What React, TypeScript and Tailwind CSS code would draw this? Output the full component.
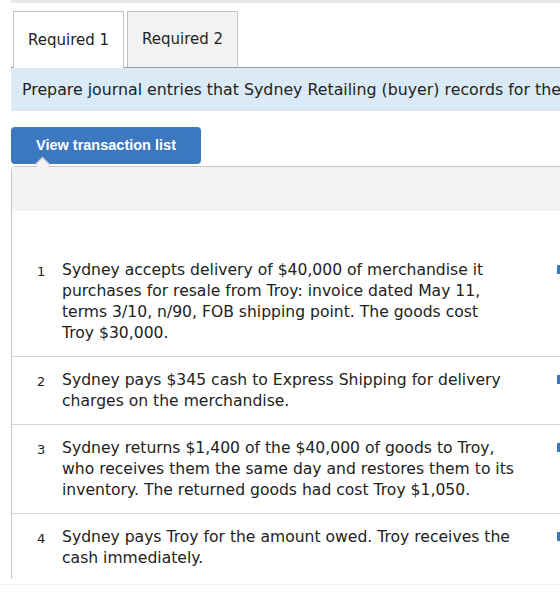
import React from "react";

const rows = [
  {
    n: "1",
    t: [
      "Sydney accepts delivery of $40,000 of merchandise it",
      "purchases for resale from Troy: invoice dated May 11,",
      "terms 3/10, n/90, FOB shipping point. The goods cost",
      "Troy $30,000.",
    ],
  },
  {
    n: "2",
    t: [
      "Sydney pays $345 cash to Express Shipping for delivery",
      "charges on the merchandise.",
    ],
  },
  {
    n: "3",
    t: [
      "Sydney returns $1,400 of the $40,000 of goods to Troy,",
      "who receives them the same day and restores them to its",
      "inventory. The returned goods had cost Troy $1,050.",
    ],
  },
  {
    n: "4",
    t: [
      "Sydney pays Troy for the amount owed. Troy receives the",
      "cash immediately.",
    ],
  },
];

export default function App() {
  return (
    <div className="w-[560px] h-[593px] bg-white overflow-hidden relative font-['DejaVu_Sans',Verdana,sans-serif] text-[#222]">
      <div className="ml-[11px] h-[3px] bg-[#e8e8e8]" />
      <div className="flex items-end mt-[8px] ml-[11px]">
        <div className="w-[2px] h-px bg-[#9a9a9a]" />
        <div className="w-[111px] h-[57px] border border-b-0 border-[#c4c4c4] bg-white flex items-center justify-center text-[15px]">
          Required 1
        </div>
        <div className="w-[3px] h-px bg-[#9a9a9a]" />
        <div className="w-[111px] h-[57px] border border-[#c4c4c4] border-b-[#9a9a9a] bg-[#f2f2f2] flex items-center justify-center text-[15px]">
          Required 2
        </div>
        <div className="flex-1 h-px bg-[#9a9a9a]" />
      </div>
      <div className="ml-[11px] h-[43px] bg-[#dbeaf7] flex items-center pl-[11px] whitespace-nowrap overflow-hidden text-[15.8px] text-[#222]">
        Prepare journal entries that Sydney Retailing (buyer) records for the
      </div>
      <div className="relative pt-[16px]">
        <div className="ml-[11px] w-[190px] h-[37px] rounded-[4px] bg-[#3b78bf] text-white font-['Liberation_Sans',Arial,sans-serif] font-bold text-[14.5px] flex items-center justify-center">
          View transaction list
        </div>
        <div className="ml-[11px] mt-[2px] w-[600px] border-l border-t border-[#c8c8c8] rounded-tl-[5px] h-[413px] overflow-hidden">
          <div className="h-[44px] bg-[#f2f2f2]" />
          <div className="h-[36px]" />
          {rows.map((r, i) => (
            <div
              key={r.n}
              className={`flex pt-[13px] pb-[12px] ${i < rows.length - 1 ? "border-b border-[#d6d6d6]" : ""}`}
            >
              <div className="w-[25px] ml-[25px] text-[13px] leading-[21px] pt-px">{r.n}</div>
              <div className="w-[458px] text-[15.6px] leading-[21px] whitespace-nowrap">
                {r.t.map((l) => (
                  <div key={l}>{l}</div>
                ))}
              </div>
              <div className="ml-[37px] mt-[5px] w-[4px] h-[9px] bg-[#3b78bf]" />
            </div>
          ))}
        </div>
        <div className="absolute left-[37px] top-[48px] w-[11px] h-[11px] bg-[#f2f2f2] border-l border-t border-[#c8c8c8] rotate-45" />
      </div>
      <div className="mt-[5px] h-px bg-[#efefef]" />
    </div>
  );
}
